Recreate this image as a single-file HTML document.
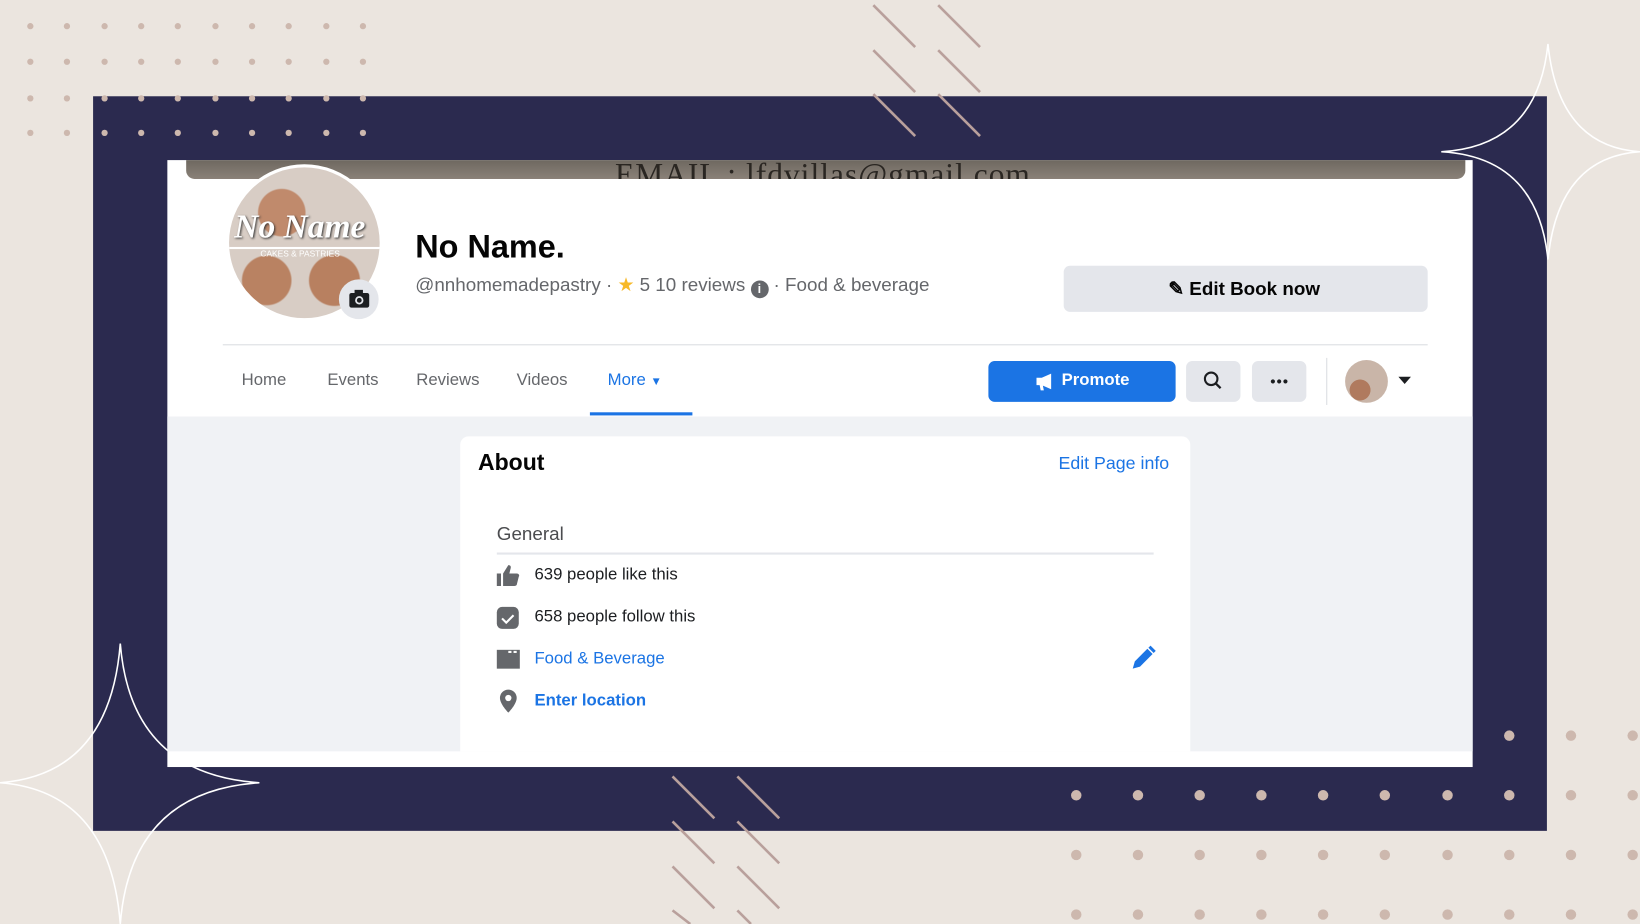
<!DOCTYPE html>
<html><head><meta charset="utf-8"><style>
*{margin:0;padding:0;box-sizing:border-box}
html,body{width:1640px;height:924px;overflow:hidden;background:#ebe5df;font-family:"Liberation Sans",sans-serif}
#w{position:absolute;left:0;top:0;width:1568px;height:883px;transform:scale(1.04592,1.04643);transform-origin:0 0}
.a{position:absolute}
.t{position:absolute;white-space:nowrap}
.btn{position:absolute;background:#e4e6eb;border-radius:6px}
</style></head><body><div id="w">
<svg class="a" style="left:0;top:0" width="1568" height="883">
<rect x="89" y="92" width="1390" height="702" fill="#2b2a4f"/>
<g fill="#cdb8ae">
<g id="r1"><circle cx="29" cy="25" r="3"/><circle cx="64" cy="25" r="3"/><circle cx="100" cy="25" r="3"/><circle cx="135" cy="25" r="3"/><circle cx="170" cy="25" r="3"/><circle cx="206" cy="25" r="3"/><circle cx="241" cy="25" r="3"/><circle cx="276" cy="25" r="3"/><circle cx="312" cy="25" r="3"/><circle cx="347" cy="25" r="3"/></g>
<use href="#r1" y="34"/><use href="#r1" y="69"/><use href="#r1" y="102"/>
<g id="r2"><circle cx="1029" cy="760" r="5"/><circle cx="1088" cy="760" r="5"/><circle cx="1147" cy="760" r="5"/><circle cx="1206" cy="760" r="5"/><circle cx="1265" cy="760" r="5"/><circle cx="1324" cy="760" r="5"/><circle cx="1384" cy="760" r="5"/><circle cx="1443" cy="760" r="5"/><circle cx="1502" cy="760" r="5"/><circle cx="1561" cy="760" r="5"/></g>
<use href="#r2" y="57"/><use href="#r2" y="114"/>
<circle cx="1443" cy="703" r="5"/><circle cx="1502" cy="703" r="5"/><circle cx="1561" cy="703" r="5"/>
</g>
<g stroke="#b9a09c" stroke-width="2.5">
<line x1="835" y1="5" x2="875" y2="45"/><line x1="897" y1="5" x2="937" y2="45"/>
<line x1="835" y1="48" x2="875" y2="88"/><line x1="897" y1="48" x2="937" y2="88"/>
<line x1="835" y1="90" x2="875" y2="130"/><line x1="897" y1="90" x2="937" y2="130"/>
<line x1="643" y1="742" x2="683" y2="782"/><line x1="705" y1="742" x2="745" y2="782"/>
<line x1="643" y1="785" x2="683" y2="825"/><line x1="705" y1="785" x2="745" y2="825"/>
<line x1="643" y1="828" x2="683" y2="868"/><line x1="705" y1="828" x2="745" y2="868"/>
<line x1="643" y1="870" x2="660" y2="883"/><line x1="705" y1="870" x2="718" y2="883"/>
</g>
<g fill="none" stroke="#fff" stroke-width="1.5">
<path d="M1480 42 Q1490 140 1568 145 Q1490 150 1480 248 Q1470 150 1378 145 Q1470 140 1480 42Z"/>
<path d="M115 615 Q125 740 248 748 Q125 756 115 883 Q105 756 0 748 Q105 740 115 615Z"/>
</g>
<rect x="160" y="153" width="1248" height="580" fill="#fff"/>
<rect x="160" y="398" width="1248" height="320" fill="#f0f2f5"/>
</svg>
<div class="a" style="left:178px;top:153px;width:1223px;height:18px;background:linear-gradient(#6e6860,#8a8178);border-radius:0 0 8px 8px;overflow:hidden"><div class="t" style="left:410px;top:-2px;font-family:'Liberation Serif',serif;font-size:30px;color:#2a2622;letter-spacing:1px">EMAIL : lfdvillas@gmail.com</div></div>
<div class="a" style="left:216px;top:157px;width:150px;height:150px;border-radius:50%;border:3px solid #fff;background:radial-gradient(circle at 35% 30%,#c08a6c 0 16%,transparent 17%),radial-gradient(circle at 70% 75%,#b88060 0 16%,transparent 17%),radial-gradient(circle at 25% 75%,#b98262 0 15%,transparent 16%),#d8cdc5;overflow:hidden"><div class="t" style="left:5px;top:38px;font-family:'Liberation Serif',serif;font-style:italic;font-weight:bold;font-size:32px;color:#fff;text-shadow:1px 1px 2px #333">No Name</div><div class="a" style="left:0;top:76px;width:150px;height:2px;background:#fff"></div><div class="t" style="left:30px;top:78px;font-size:8px;color:#fff">CAKES &amp; PASTRIES</div></div>
<div class="a" style="left:324px;top:267px;width:38px;height:38px;border-radius:50%;background:#e4e6eb"><svg width="38" height="38"><rect x="10" y="13" width="19" height="14" rx="2" fill="#1c1e21"/><rect x="15" y="10" width="8" height="4" fill="#1c1e21"/><circle cx="19.5" cy="20" r="4" fill="#e4e6eb"/><circle cx="19.5" cy="20" r="2.3" fill="#1c1e21"/></svg></div>
<div class="t" style="left:397px;top:218px;font-size:31px;font-weight:bold;color:#050505">No Name.</div>
<div class="t" style="left:397px;top:262px;font-size:18px;color:#65676b">@nnhomemadepastry · <span style="color:#f7b928">★</span> 5 10 reviews <span style="display:inline-block;width:17px;height:17px;border-radius:50%;background:#65676b;color:#fff;font-size:12px;text-align:center;line-height:17px;font-weight:bold;vertical-align:-2px">i</span> · Food &amp; beverage</div>
<div class="btn" style="left:1017px;top:254px;width:348px;height:44px"><div class="t" style="left:100px;top:12px;font-size:18px;font-weight:bold;color:#050505">✎ Edit Book now</div></div>
<div class="a" style="left:213px;top:329px;width:1152px;height:1px;background:#dadde1"></div>
<div class="t" style="left:231px;top:355px;font-size:16px;color:#65676b">Home</div>
<div class="t" style="left:313px;top:355px;font-size:16px;color:#65676b">Events</div>
<div class="t" style="left:398px;top:355px;font-size:16px;color:#65676b">Reviews</div>
<div class="t" style="left:494px;top:355px;font-size:16px;color:#65676b">Videos</div>
<div class="t" style="left:581px;top:355px;font-size:16px;color:#1b74e4">More <span style="font-size:11px">▼</span></div>
<div class="a" style="left:564px;top:394px;width:98px;height:3px;background:#1b74e4"></div>
<div class="a" style="left:945px;top:345px;width:179px;height:39px;background:#1b74e4;border-radius:6px"><svg class="a" style="left:44px;top:11px" width="20" height="18"><path d="M2 5h5l9-4v15l-9-4H2z M5 12h3l1 5H6z" fill="#fff"/></svg><div class="t" style="left:70px;top:10px;font-size:16px;font-weight:bold;color:#fff">Promote</div></div>
<div class="btn" style="left:1134px;top:345px;width:52px;height:39px"><svg width="52" height="39"><circle cx="24" cy="17" r="6" fill="none" stroke="#1c1e21" stroke-width="2"/><line x1="28.5" y1="21.5" x2="33" y2="26" stroke="#1c1e21" stroke-width="2.2"/></svg></div>
<div class="btn" style="left:1197px;top:345px;width:52px;height:39px"><svg width="52" height="39"><circle cx="20" cy="19.5" r="2" fill="#1c1e21"/><circle cx="26" cy="19.5" r="2" fill="#1c1e21"/><circle cx="32" cy="19.5" r="2" fill="#1c1e21"/></svg></div>
<div class="a" style="left:1268px;top:342px;width:1px;height:45px;background:#dadde1"></div>
<div class="a" style="left:1286px;top:344px;width:41px;height:41px;border-radius:50%;background:radial-gradient(circle at 35% 70%,#b07a5e 0 25%,transparent 26%),#c9b5a8"></div>
<svg class="a" style="left:1336px;top:359px" width="14" height="9"><path d="M1 1h12L7 8z" fill="#1c1e21"/></svg>
<div class="a" style="left:440px;top:417px;width:698px;height:301px;background:#fff;border-radius:8px 8px 0 0"></div>
<div class="t" style="left:457px;top:429px;font-size:22px;font-weight:bold;color:#050505">About</div>
<div class="t" style="left:1012px;top:433px;font-size:17px;color:#1b74e4">Edit Page info</div>
<div class="t" style="left:475px;top:500px;font-size:18px;color:#4b4c4f">General</div>
<div class="a" style="left:475px;top:528px;width:628px;height:2px;background:#e4e6eb"></div>
<svg class="a" style="left:474px;top:538px" width="24" height="24"><path d="M1 10h4v12H1z M7 10l5-8c2 0 3 1 2 4l-1 4h7c2 0 3 2 2 3l-2 8c-1 1-2 1-3 1H7z" fill="#65676b"/></svg>
<div class="t" style="left:511px;top:541px;font-size:16px;color:#1c1e21">639 people like this</div>
<svg class="a" style="left:474px;top:578px" width="24" height="24"><rect x="1" y="2" width="21" height="21" rx="5" fill="#65676b"/><path d="M6 13l4 4 7-7" stroke="#fff" stroke-width="2" fill="none"/></svg>
<div class="t" style="left:511px;top:581px;font-size:16px;color:#1c1e21">658 people follow this</div>
<svg class="a" style="left:474px;top:619px" width="24" height="22"><rect x="1" y="2" width="22" height="18" fill="#65676b"/><rect x="12" y="3" width="3" height="2" fill="#fff"/><rect x="17" y="3" width="3" height="2" fill="#fff"/></svg>
<div class="t" style="left:511px;top:621px;font-size:16px;color:#1b74e4">Food &amp; Beverage</div>
<svg class="a" style="left:1080px;top:616px" width="26" height="26"><path d="M3 23l2-7 12-12 5 5-12 12z" fill="#1b74e4"/><path d="M18 3l2-2 5 5-2 2z" fill="#1b74e4"/></svg>
<svg class="a" style="left:476px;top:658px" width="20" height="24"><path d="M10 1a8 8 0 0 1 8 8c0 6-8 14-8 14S2 15 2 9a8 8 0 0 1 8-8z" fill="#65676b"/><circle cx="10" cy="9" r="3" fill="#fff"/></svg>
<div class="t" style="left:511px;top:661px;font-size:16px;font-weight:bold;color:#1b74e4">Enter location</div>
</div></body></html>
